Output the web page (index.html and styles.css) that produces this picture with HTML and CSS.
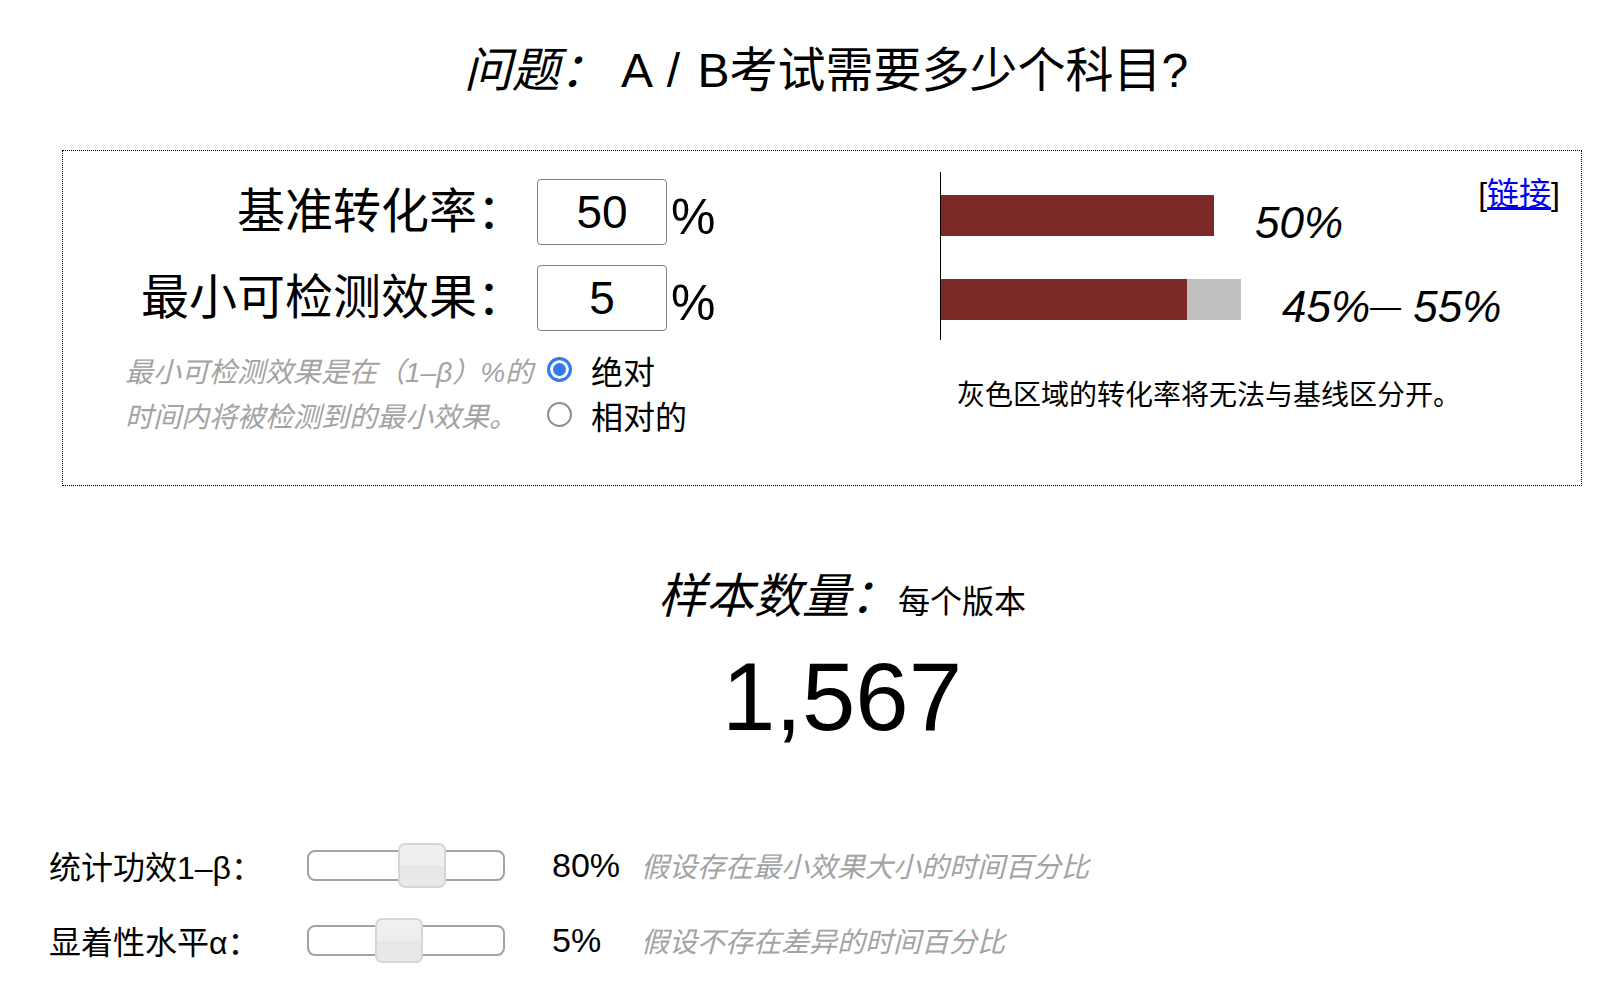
FILE: index.html
```html
<!DOCTYPE html>
<html lang="zh-CN">
<head>
<meta charset="utf-8">
<title>A/B 样本量计算器</title>
<link rel="stylesheet" href="styles.css">
</head>
<body>
<div class="page">
  <h1 class="question"><span class="q-label">问题：</span> A <span class="slash">/</span> B考试需要多少个科目?</h1>

  <div class="panel">
    <div class="inputs">
      <div class="field-grid">
        <label class="field-label" for="baseline">基准转化率：</label>
        <input class="num" id="baseline" type="text" value="50">
        <span class="unit">%</span>
        <label class="field-label" for="mde">最小可检测效果：</label>
        <input class="num" id="mde" type="text" value="5">
        <span class="unit">%</span>
      </div>
      <div class="mde-row">
        <p class="hint">最小可检测效果是在（1–β）%的<br>时间内将被检测到的最小效果。</p>
        <div class="radios">
          <label class="radio"><input type="radio" name="mode" checked><span>绝对</span></label>
          <label class="radio"><input type="radio" name="mode"><span>相对的</span></label>
        </div>
      </div>
    </div>

    <div class="viz">
      <div class="viz-top">
        <div class="chart">
          <div class="bar-row">
            <div class="bar" style="width:273px"></div>
            <span class="bar-label">50%</span>
          </div>
          <div class="bar-row">
            <div class="bar" style="width:246px"></div>
            <div class="bar gray" style="width:54px"></div>
            <span class="bar-label">45%<span class="dash">—</span> 55%</span>
          </div>
        </div>
        <div class="link">[<a href="#">链接</a>]</div>
      </div>
      <p class="caption">灰色区域的转化率将无法与基线区分开。</p>
    </div>
  </div>

  <div class="result">
    <div class="result-label"><span class="rl-main">样本数量：</span><span class="rl-sub">每个版本</span></div>
    <div class="result-value">1,567</div>
  </div>

  <div class="sliders">
    <div class="slider-row">
      <span class="s-label">统计功效1–β：</span>
      <input type="range" class="range" min="0" max="100" value="61">
      <span class="s-value">80%</span>
      <span class="s-hint">假设存在最小效果大小的时间百分比</span>
    </div>
    <div class="slider-row">
      <span class="s-label">显着性水平α：</span>
      <input type="range" class="range" min="0" max="100" value="45">
      <span class="s-value">5%</span>
      <span class="s-hint">假设不存在差异的时间百分比</span>
    </div>
  </div>
</div>
</body>
</html>
```

FILE: styles.css
```css
* { box-sizing: border-box; }

body {
  margin: 0;
  background: #fff;
  color: #000;
  font-family: "Liberation Sans", "Noto Sans CJK SC", sans-serif;
}

.page { width: 1604px; }

.question {
  margin: 43px 0 0;
  padding: 0 4px 0 52px;
  text-align: center;
  font-size: 48px;
  line-height: 56px;
  font-weight: normal;
}
.q-label { font-style: italic; }
.slash { margin: 0 4px 0 3px; }

.panel {
  margin: 51px 22px 0 62px;
  height: 336px;
  border: 1px dotted #000;
  display: flex;
}

.inputs {
  flex: none;
  width: 860px;
  padding-top: 28px;
}

.field-grid {
  display: grid;
  grid-template-columns: 462px 130px auto;
  column-gap: 12px;
  row-gap: 20px;
  align-items: center;
}

.field-label {
  text-align: right;
  font-size: 48px;
  line-height: 56px;
}

.num {
  width: 130px;
  height: 66px;
  border: 1px solid #808080;
  border-radius: 4px;
  padding: 0;
  font: 46px "Liberation Sans", sans-serif;
  text-align: center;
  color: #000;
  background: #fff;
}

.unit {
  margin: 10px 0 0 -8px;
  font-size: 50px;
  line-height: 56px;
}

.mde-row {
  display: flex;
  margin-top: 19px;
  padding-left: 62px;
}

.hint {
  margin: 0;
  width: 422px;
  font-size: 28px;
  line-height: 45px;
  font-style: italic;
  color: #a3a3a3;
}

.radios {
  display: flex;
  flex-direction: column;
  margin-top: -3px;
}

.radio {
  display: flex;
  align-items: center;
  height: 45px;
  font-size: 32px;
}

.radio input {
  appearance: none;
  -webkit-appearance: none;
  width: 25px;
  height: 25px;
  margin: 0 19px 0 0;
  border: 2px solid #8e8e8e;
  border-radius: 50%;
  background: #fff;
}

.radio input:checked {
  border: 3px solid #3478f6;
  background: #3478f6;
  box-shadow: inset 0 0 0 3px #fff;
}

.viz {
  flex: 1;
  min-width: 0;
  padding: 0 21px 0 17px;
}

.viz-top {
  display: flex;
  justify-content: space-between;
  align-items: flex-start;
}

.chart {
  flex: 1;
  min-width: 0;
  margin-top: 21px;
  height: 168px;
  border-left: 1px solid #000;
  padding: 23px 0 20px;
  display: flex;
  flex-direction: column;
  gap: 43px;
}

.bar-row {
  display: flex;
  align-items: flex-start;
  height: 41px;
}

.bar {
  flex: none;
  height: 41px;
  background: #7b2a27;
}
.bar.gray { background: #c0c0c0; }

.bar-label {
  flex: none;
  margin: 6px 0 0 41px;
  font-size: 44px;
  line-height: 44px;
  font-style: italic;
  white-space: nowrap;
}

.dash {
  font-size: 31px;
  font-style: normal;
  vertical-align: 5px;
}

.link {
  margin-top: 23px;
  font-size: 32px;
  line-height: 40px;
  white-space: nowrap;
  flex-shrink: 0;
}
.link a { color: #0000ee; }

.caption {
  margin: 38px 0 0 17px;
  font-size: 28px;
  line-height: 36px;
}

.result {
  margin-top: 83px;
  padding: 0 4px 0 84px;
  text-align: center;
}

.result-label { line-height: 56px; }
.rl-main {
  font-size: 48px;
  font-style: italic;
}
.rl-sub { font-size: 32px; }

.result-value {
  margin-top: 6px;
  font-size: 96px;
  line-height: 110px;
}

.sliders {
  margin-top: 90px;
  padding-left: 49px;
  display: flex;
  flex-direction: column;
  gap: 29px;
}

.slider-row {
  display: flex;
  align-items: center;
  height: 46px;
}

.s-label {
  width: 258px;
  font-size: 32px;
}

.range {
  -webkit-appearance: none;
  appearance: none;
  width: 198px;
  height: 46px;
  margin: 0;
  background: transparent;
}

.range::-webkit-slider-runnable-track {
  box-sizing: border-box;
  height: 31px;
  border: 2px solid #a2a2a2;
  border-radius: 8px;
  background: #fff;
}

.range::-webkit-slider-thumb {
  -webkit-appearance: none;
  appearance: none;
  box-sizing: border-box;
  width: 48px;
  height: 45px;
  margin-top: -9px;
  border: 2px solid #d6d6d6;
  border-radius: 7px;
  background: linear-gradient(#f0f0f0 0%, #eeeeee 50%, #e6e6e6 52%, #eaeaea 100%);
}

.s-value {
  width: 89px;
  margin-left: 47px;
  font-size: 34px;
}

.s-hint {
  font-size: 28px;
  font-style: italic;
  color: #a3a3a3;
}
```
